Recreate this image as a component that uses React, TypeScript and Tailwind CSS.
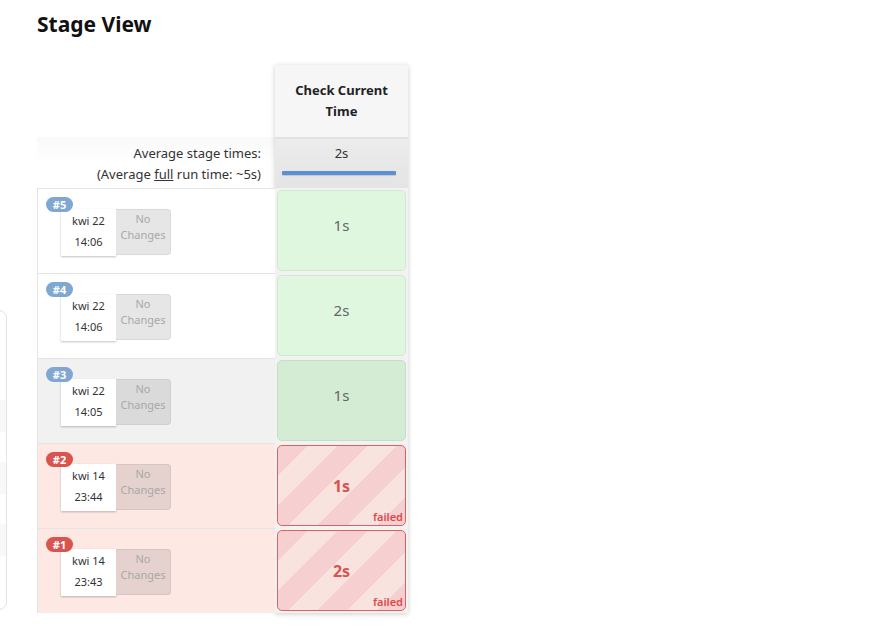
import React from 'react';

type Run = {
  id: number;
  date: string;
  time: string;
  duration: string;
  status: 'ok' | 'failed';
  shaded?: boolean;
};

const runs: Run[] = [
  { id: 5, date: 'kwi 22', time: '14:06', duration: '1s', status: 'ok' },
  { id: 4, date: 'kwi 22', time: '14:06', duration: '2s', status: 'ok' },
  { id: 3, date: 'kwi 22', time: '14:05', duration: '1s', status: 'ok', shaded: true },
  { id: 2, date: 'kwi 14', time: '23:44', duration: '1s', status: 'failed' },
  { id: 1, date: 'kwi 14', time: '23:43', duration: '2s', status: 'failed' },
];

function RunCell({ run }: { run: Run }) {
  const failed = run.status === 'failed';
  const rowBg = failed ? 'bg-[#fde8e4]' : run.shaded ? 'bg-[#f1f1f1]' : 'bg-white';
  return (
    <div className={`relative h-[85px] border-t border-l border-[#e4e4e4] ${rowBg}`}>
      <span
        className={`absolute left-[8px] top-[8px] z-10 flex h-[15px] w-[27px] items-center justify-center rounded-full text-[11px] font-bold leading-none text-white ${
          failed ? 'bg-[#d9534f]' : 'bg-[#7fa7d2]'
        }`}
      >
        #{run.id}
      </span>
      <div className="absolute left-[23px] top-[20px] flex">
        <div className="flex h-[47px] w-[55px] flex-col items-center justify-center gap-[5px] bg-white pb-[2px] text-[11px] leading-[16px] text-[#333] shadow-[0_1px_2px_rgba(0,0,0,0.25)]">
          <span>{run.date}</span>
          <span>{run.time}</span>
        </div>
        <div
          className={`flex h-[46px] w-[55px] flex-col items-center pt-[1px] text-[11px] leading-[16px] text-[#a8a8a8] rounded-r-[4px] border border-l-0 ${
            failed
              ? 'bg-[#e5d2ce] border-[#d8c4c0]'
              : run.shaded
              ? 'bg-[#dadada] border-[#cfcfcf]'
              : 'bg-[#e6e6e6] border-[#dadada]'
          }`}
        >
          <span>No</span>
          <span>Changes</span>
        </div>
      </div>
    </div>
  );
}

function StageCell({ run }: { run: Run }) {
  if (run.status === 'failed') {
    return (
      <div className="p-[2px] h-[85px]">
        <div className="relative flex h-full items-center justify-center rounded-[5px] border border-[#e06060] bg-[repeating-linear-gradient(135deg,#f6d0d0_0px,#f6d0d0_21px,#f8e3de_21px,#f8e3de_42px)]">
          <span className="text-[16px] font-bold text-[#d9534f]">{run.duration}</span>
          <span className="absolute bottom-[3px] right-[2px] text-[11px] font-semibold leading-none text-[#e04848]">
            failed
          </span>
        </div>
      </div>
    );
  }
  return (
    <div className="p-[2px] h-[85px]">
      <div
        className={`flex h-full items-start justify-center rounded-[5px] border pt-[23px] ${
          run.shaded ? 'bg-[#d3ecd3] border-[#c5dfc5]' : 'bg-[#dff7df] border-[#cfe9cf]'
        }`}
      >
        <span className="text-[15px] text-[#666]">{run.duration}</span>
      </div>
    </div>
  );
}

export default function App() {
  return (
    <div className="relative min-h-[632px] w-[896px] overflow-hidden bg-white font-['Noto_Sans','Open_Sans',sans-serif] text-[#333]">
      {/* panel peeking in from the left */}
      <div className="absolute left-[-200px] top-[310px] h-[300px] w-[207px] rounded-[8px] border border-[#e3e3ec] bg-white overflow-hidden">
        <div className="mt-[89px] h-[32px] bg-[#f8f8f8]" />
        <div className="mt-[30px] h-[32px] bg-[#f8f8f8]" />
        <div className="mt-[30px] h-[32px] bg-[#f8f8f8]" />
      </div>

      <div className="pl-[37px] pt-[8px]">
        <h2 className="text-[21px] font-bold leading-[32px] text-[#111]">Stage View</h2>

        <div className="mt-[25px] flex">
          {/* left column */}
          <div className="w-[238px]">
            <div className="h-[72px]" />
            <div className="h-[51px] pr-[14px] pt-[6px] text-right text-[13px] leading-[21px] text-[#333] bg-gradient-to-b from-[#f9f9f9] via-white to-white">
              <div>Average stage times:</div>
              <div>
                (Average <span className="underline">full</span> run time: ~5s)
              </div>
            </div>
            {runs.map((r) => (
              <RunCell key={r.id} run={r} />
            ))}
          </div>

          {/* stage column */}
          <div className="w-[133px] self-start bg-[#f2f2f2] shadow-[0_1px_5px_rgba(0,0,0,0.2)]">
            <div className="flex h-[72px] flex-col items-center justify-center bg-[#f6f6f6] text-center text-[13px] font-bold leading-[21px] text-[#222]">
              <span>Check Current</span>
              <span>Time</span>
            </div>
            <div className="h-[51px] border-t-2 border-[#e2e2e2] bg-gradient-to-b from-[#ececec] to-[#e4e4e4] pl-[7px] pr-[12px] pt-[5px]">
              <div className="pl-[5px] text-center text-[13px] leading-[18px] text-[#333]">2s</div>
              <div className="mt-[9px] h-[4px] rounded-[1px] bg-[#5b8fd8] shadow-[0_1px_1px_rgba(0,0,0,0.15)]" />
            </div>
            {runs.map((r) => (
              <StageCell key={r.id} run={r} />
            ))}
          </div>
        </div>
      </div>
    </div>
  );
}
